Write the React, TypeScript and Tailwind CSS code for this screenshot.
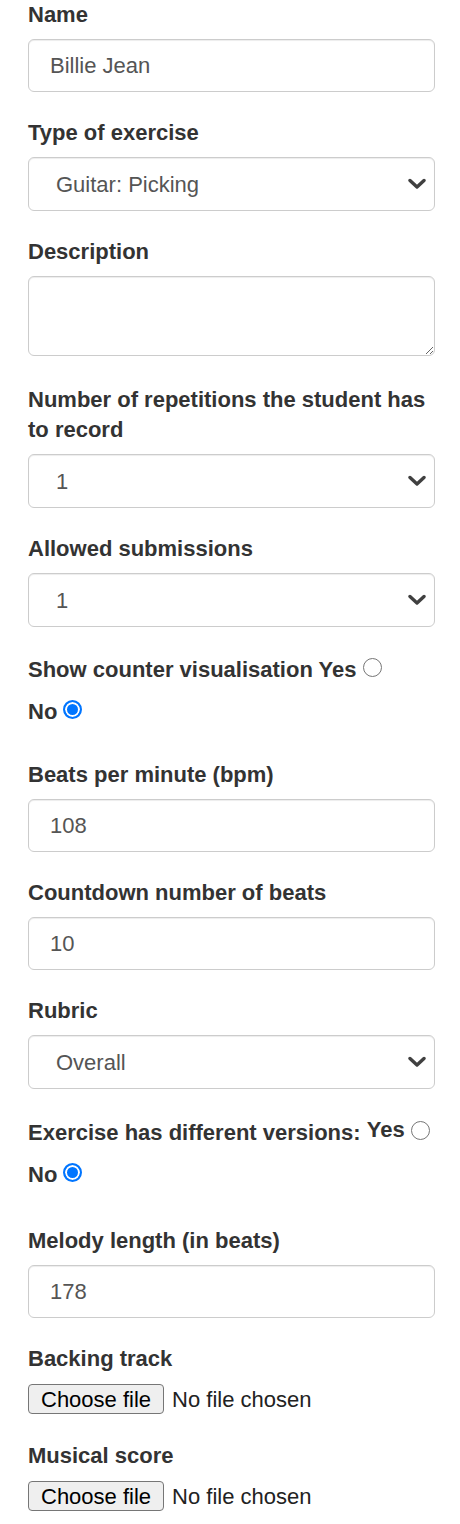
import React from "react";

const font = { fontFamily: '"Liberation Sans", Arial, Helvetica, sans-serif' };

function Label({ children }: { children: React.ReactNode }) {
  return <div className="font-bold leading-[30px] mb-[9px] text-[#333]">{children}</div>;
}

function TextInput({ value }: { value: string }) {
  return (
    <input
      defaultValue={value}
      className="block w-full h-[53px] px-[21px] rounded-[6px] border border-[#ccc] bg-white text-[#555] text-[22px] shadow-[inset_0_1px_1px_rgba(0,0,0,0.075)] outline-none"
    />
  );
}

function Select({ value }: { value: string }) {
  return (
    <div className="flex items-center justify-between w-full h-[54px] pl-[27px] pr-[8px] rounded-[6px] border border-[#ccc] bg-white text-[#555] shadow-[inset_0_1px_1px_rgba(0,0,0,0.075)]">
      <span>{value}</span>
      <svg width="18" height="12" viewBox="0 0 18 12" fill="none">
        <polyline points="2,2.5 9,9 16,2.5" stroke="#404040" strokeWidth="3.4" strokeLinecap="round" strokeLinejoin="round" />
      </svg>
    </div>
  );
}

function Radio({ checked }: { checked?: boolean }) {
  return checked ? (
    <span className="inline-block align-baseline w-[19px] h-[19px] rounded-full border-2 border-[#0075ff] bg-[#0075ff] shadow-[inset_0_0_0_2px_#fff]" />
  ) : (
    <span className="inline-block align-baseline w-[19px] h-[19px] rounded-full border-[1.5px] border-[#767676] bg-white" />
  );
}

function FileInput() {
  return (
    <div className="flex items-center gap-[8px] h-[30px]">
      <span className="flex items-center h-[30px] px-[12px] rounded-[4px] border border-[#767676] bg-[#efefef] text-black">
        Choose file
      </span>
      <span className="text-[#222]">No file chosen</span>
    </div>
  );
}

export default function App() {
  return (
    <div className="bg-white pl-[28px] pr-[25px] text-[22px]" style={font}>
      <div className="mb-[26px]">
        <Label>Name</Label>
        <TextInput value="Billie Jean" />
      </div>

      <div className="mb-[26px]">
        <Label>Type of exercise</Label>
        <Select value="Guitar: Picking" />
      </div>

      <div className="mb-[29px]">
        <Label>Description</Label>
        <textarea className="block w-full h-[80px] rounded-[6px] border border-[#ccc] bg-white shadow-[inset_0_1px_1px_rgba(0,0,0,0.075)] outline-none" />
      </div>

      <div className="mb-[26px]">
        <Label>Number of repetitions the student has to record</Label>
        <Select value="1" />
      </div>

      <div className="mb-[28px]">
        <Label>Allowed submissions</Label>
        <Select value="1" />
      </div>

      <div className="mb-[33px] font-bold text-[#333]">
        <div className="leading-[30px]">
          Show counter visualisation Yes <Radio />
        </div>
        <div className="leading-[30px] mt-[12px]">
          No <Radio checked />
        </div>
      </div>

      <div className="mb-[26px]">
        <Label>Beats per minute (bpm)</Label>
        <TextInput value="108" />
      </div>

      <div className="mb-[26px]">
        <Label>Countdown number of beats</Label>
        <TextInput value="10" />
      </div>

      <div className="mb-[26px]">
        <Label>Rubric</Label>
        <Select value="Overall" />
      </div>

      <div className="mb-[36px] font-bold text-[#333]">
        <div className="leading-[30px] whitespace-nowrap">
          Exercise has different versions: <span className="align-[3px]">Yes</span> <Radio />
        </div>
        <div className="leading-[30px] mt-[12px]">
          No <Radio checked />
        </div>
      </div>

      <div className="mb-[26px]">
        <Label>Melody length (in beats)</Label>
        <TextInput value="178" />
      </div>

      <div className="mb-[27px]">
        <div className="font-bold leading-[30px] mb-[10px] text-[#333]">Backing track</div>
        <FileInput />
      </div>

      <div className="pb-[12px]">
        <div className="font-bold leading-[30px] mb-[10px] text-[#333]">Musical score</div>
        <FileInput />
      </div>
    </div>
  );
}
